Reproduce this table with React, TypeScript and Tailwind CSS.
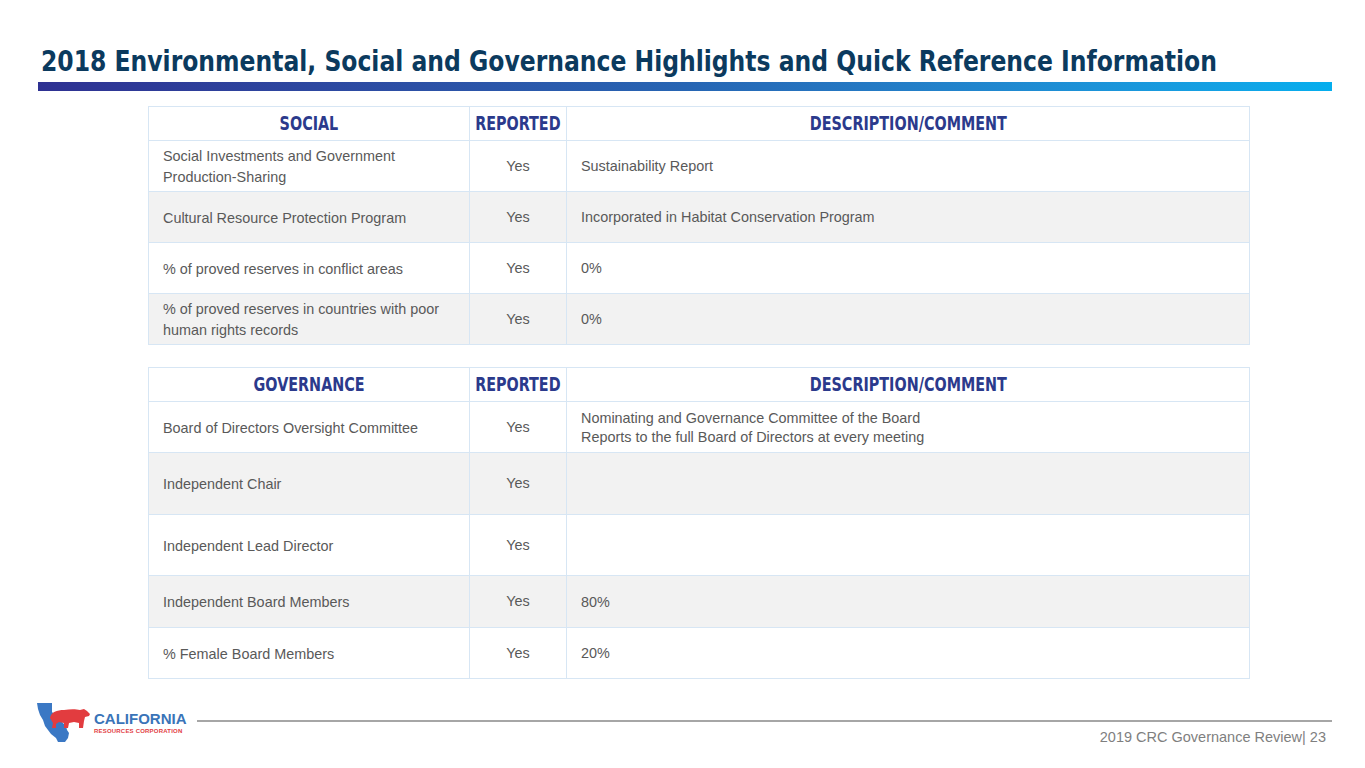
const socialRows = [
  { label: ['Social Investments and Government', 'Production-Sharing'], desc: ['Sustainability Report'], h: 'h-[51px]' },
  { label: ['Cultural Resource Protection Program'], desc: ['Incorporated in Habitat Conservation Program'], h: 'h-[51px]' },
  { label: ['% of proved reserves in conflict areas'], desc: ['0%'], h: 'h-[51px]' },
  { label: ['% of proved reserves in countries with poor', 'human rights records'], desc: ['0%'], h: 'h-[51px]' },
];

const govRows = [
  {
    label: ['Board of Directors Oversight Committee'],
    desc: ['Nominating and Governance Committee of the Board', 'Reports to the full Board of Directors at every meeting'],
    h: 'h-[51px]',
  },
  { label: ['Independent Chair'], desc: [], h: 'h-[62px]' },
  { label: ['Independent Lead Director'], desc: [], h: 'h-[61px]' },
  { label: ['Independent Board Members'], desc: ['80%'], h: 'h-[52px]' },
  { label: ['% Female Board Members'], desc: ['20%'], h: 'h-[51px]' },
];

const narrow = { fontFamily: '"Liberation Sans Narrow", "DejaVu Sans Condensed", "Liberation Sans", sans-serif' };

function Head({ children }: { children: string }) {
  return <span className="inline-block scale-x-[0.84] whitespace-nowrap">{children}</span>;
}

function Table({ title, rows }: { title: string; rows: typeof socialRows }) {
  return (
    <div className="w-[1102px] border border-[#d7e6f4] text-[14.4px] text-[#595959]">
      <div className="flex h-[33px] items-center bg-white text-[19px] font-bold text-[#2b3a8c]" style={narrow}>
        <div className="flex h-full w-[321px] items-center justify-center border-r border-[#d7e6f4]">
          <Head>{title}</Head>
        </div>
        <div className="flex h-full w-[97px] items-center justify-center border-r border-[#d7e6f4]">
          <Head>REPORTED</Head>
        </div>
        <div className="flex h-full flex-1 items-center justify-center">
          <Head>DESCRIPTION/COMMENT</Head>
        </div>
      </div>
      {rows.map((r, i) => (
        <div key={i} className={`flex border-t border-[#d7e6f4] ${r.h} ${i % 2 === 1 ? 'bg-[#f2f2f2]' : 'bg-white'}`}>
          <div className="flex w-[321px] flex-col justify-center whitespace-nowrap border-r border-[#d7e6f4] pl-[14px] pt-[2px] leading-[21px]">
            {r.label.map((l) => (
              <span key={l}>{l}</span>
            ))}
          </div>
          <div className="flex w-[97px] items-center justify-center border-r border-[#d7e6f4] pt-[1px]">Yes</div>
          <div className="flex flex-1 flex-col justify-center whitespace-nowrap pl-[14px] pt-[1px] leading-[19px]">
            {r.desc.map((d) => (
              <span key={d}>{d}</span>
            ))}
          </div>
        </div>
      ))}
    </div>
  );
}

function Logo() {
  return (
    <div className="flex items-center gap-[2px]">
      <svg width="56" height="44" viewBox="0 0 56 44">
        <path
          d="M1 3 L16 3 L16 12 L30 26 L31 30 L33 33 L32 38 L29 42 L22 42 L20 38 L15 34 L12 30 L9 26 L7 20 L4 15 L2 9 Z"
          fill="#3b78c4"
        />
        <path
          d="M14 18 C15 12 21 10 28 10 C34 9 40 9 44 10 L48 9 L51 11 L54 14 L53 16 L49 17 L48 21 L47 28 L43 28 L43 23 L38 22 L33 23 L32 28 L28 28 L28 23 L23 22 L20 24 L20 28 L16 28 L17 23 Z"
          fill="#e23c3f"
        />
      </svg>
      <div className="flex flex-col" style={{ fontFamily: '"Liberation Sans", sans-serif' }}>
        <span className="text-[15px] leading-[17px] font-bold text-[#3a74b8]">CALIFORNIA</span>
        <span className="text-[6px] leading-[8px] font-bold tracking-[0.2px] text-[#e23c3f]">RESOURCES CORPORATION</span>
      </div>
    </div>
  );
}

export default function App() {
  return (
    <div className="flex h-[768px] w-[1365px] flex-col bg-white" style={{ fontFamily: '"Liberation Sans", Arial, sans-serif' }}>
      <h1
        className="ml-[41px] mt-[44px] origin-left scale-x-[0.9] whitespace-nowrap text-[29px] leading-[34px] font-bold text-[#0b3a5e]"
        style={narrow}
      >
        2018 Environmental, Social and Governance Highlights and Quick Reference Information
      </h1>
      <div className="ml-[38px] mt-[4px] h-[9px] w-[1294px] bg-gradient-to-r from-[#2e3192] via-[#2765b3] to-[#04aeee]" />
      <div className="ml-[148px] mt-[15px] flex flex-col gap-[22px]">
        <Table title="SOCIAL" rows={socialRows} />
        <Table title="GOVERNANCE" rows={govRows} />
      </div>
      <div className="mt-[21px] flex items-center">
        <div className="ml-[36px]">
          <Logo />
        </div>
        <div className="ml-[10px] mr-[33px] mt-[-2px] h-[2px] flex-1 bg-[#a6a6a6]" />
      </div>
      <div className="mr-[39px] mt-[-17px] text-right text-[14.5px] text-[#7f7f7f]">2019 CRC Governance Review| 23</div>
    </div>
  );
}
